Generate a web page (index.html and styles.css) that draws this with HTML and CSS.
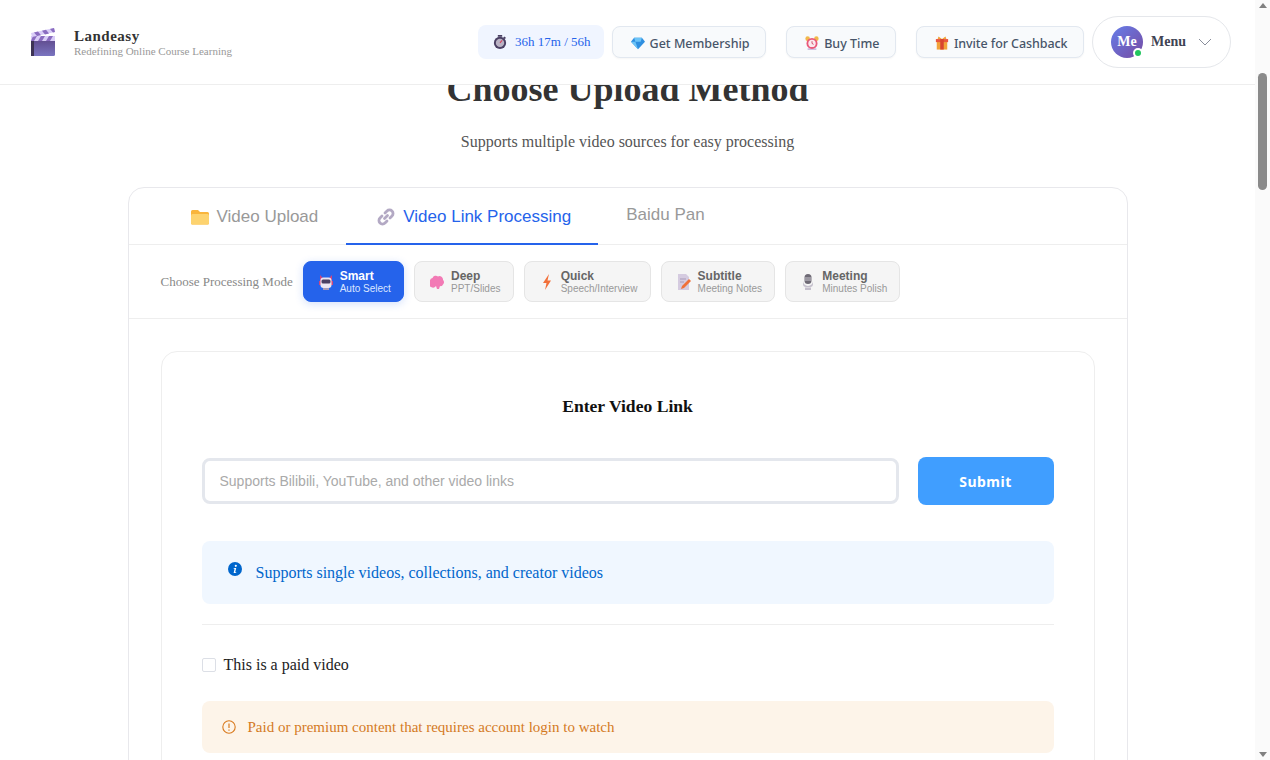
FILE: index.html
```html
<!DOCTYPE html>
<html lang="en">
<head>
    <meta charset="UTF-8">
    <meta name="viewport" content="width=device-width, initial-scale=1.0">
    <title>Landeasy - Choose Upload Method</title>
    <link rel="stylesheet" href="styles.css">
</head>
<body>
    <div class="window">
        <div class="page">
            <header class="topbar">
                <svg class="logo" viewBox="0 0 24 28">
                    <defs>
                        <linearGradient id="clapBody" x1="0" y1="0" x2="0" y2="1">
                            <stop offset="0" stop-color="#5f4a8c"/>
                            <stop offset="1" stop-color="#7a74c0"/>
                        </linearGradient>
                    </defs>
                    <rect x="0" y="11" width="24" height="17" rx="1.500" fill="url(#clapBody)"/>
                    <rect x="0" y="11" width="3" height="17" fill="#3d3355"/>
                    <rect x="0" y="8" width="24" height="5" fill="#d9cdf7"/>
                    <path d="M2 8h4l-3 5H0zM10 8h4l-3 5H7zM18 8h4l-3 5h-4z" fill="#8a6cc0"/>
                    <path d="M0 5L23 0l1 4L1 9z" fill="#d9cdf7"/>
                    <path d="M3 4.400l4-.9 3 3.700-4 .9zM11 2.700l4-.9 3 3.700-4 .9zM19 1l4-.9 1 3.900-2 .5z" fill="#8a6cc0"/>
                </svg>
                <div class="brand">
                    <div class="brand-name">Landeasy</div>
                    <div class="brand-tag">Redefining Online Course Learning</div>
                </div>
                <div class="top-actions">
                    <div class="timer">
                        <svg class="ico" viewBox="0 0 16 16">
                            <rect x="5.500" y="0" width="5" height="2" fill="#4a3f63"/>
                            <rect x="12" y="2" width="2.500" height="2" fill="#4a3f63" transform="rotate(40 13 3)"/>
                            <circle cx="8" cy="9" r="7" fill="#4a3f63"/>
                            <circle cx="8" cy="9" r="4.800" fill="#b9b2c4"/>
                            <path d="M8 9l2.500-3" stroke="#d8415c" stroke-width="1.300"/>
                        </svg>
                        <span>36h 17m / 56h</span>
                    </div>
                    <a class="top-btn">
                        <svg class="ico" viewBox="0 0 16 16">
                            <path d="M3.500 2h9L16 6.500 8 15 0 6.500z" fill="#2f8fe0"/>
                            <path d="M3.500 2h9L11 6.500H5zM0 6.500h5L8 15z" fill="#6cc4f7"/>
                        </svg>
                        Get Membership
                    </a>
                    <a class="top-btn wide-gap">
                        <svg class="ico" viewBox="0 0 16 16">
                            <circle cx="3" cy="3" r="2.600" fill="#f2b84b"/>
                            <circle cx="13" cy="3" r="2.600" fill="#f2b84b"/>
                            <rect x="3" y="14" width="10" height="2" fill="#cdbfe0"/>
                            <circle cx="8" cy="8.500" r="6.300" fill="#e9587a"/>
                            <circle cx="8" cy="8.500" r="4.200" fill="#fbe9ee"/>
                            <path d="M8 6v2.500l1.800 1" stroke="#c93c5e" stroke-width="1" fill="none"/>
                        </svg>
                        Buy Time
                    </a>
                    <a class="top-btn wide-gap invite">
                        <svg class="ico" viewBox="0 0 16 16">
                            <rect x="2" y="6" width="12" height="9.500" fill="#f2a33a"/>
                            <rect x="1" y="3.500" width="14" height="3.500" fill="#e9573f"/>
                            <rect x="6" y="3.500" width="4" height="12" fill="#d8452f"/>
                            <path d="M8 3.500L4 .5 3 3.500zM8 3.500l4-3 1 3z" fill="#f2a33a"/>
                        </svg>
                        Invite for Cashback
                    </a>
                    <div class="menu-btn">
                        <div class="avatar">Me<span class="online"></span></div>
                        <span class="menu-label">Menu</span>
                        <svg class="chevron" viewBox="0 0 14 8"><path d="M1 1l6 6 6-6" fill="none" stroke="#8a8f9c" stroke-width="1"/></svg>
                    </div>
                </div>
            </header>

            <main class="content">
                <h1>Choose Upload Method</h1>
                <p class="subtitle">Supports multiple video sources for easy processing</p>

                <section class="panel">
                    <div class="tabs">
                        <div class="tab">
                            <svg class="tab-ico" viewBox="0 0 18 16">
                                <path d="M0 2.500A1.500 1.500 0 0 1 1.500 1H7l2 2h7.500A1.500 1.500 0 0 1 18 4.500V14a1.500 1.500 0 0 1-1.500 1.500h-15A1.500 1.500 0 0 1 0 14z" fill="#f9b53c"/>
                                <rect x="0" y="5" width="18" height="10.500" rx="1.500" fill="#fdd36f"/>
                            </svg>
                            Video Upload
                        </div>
                        <div class="tab active">
                            <svg class="tab-ico" viewBox="0 0 18 18">
                                <path d="M7.500 10.500l3-3M8 5l2-2a3.500 3.500 0 0 1 5 5l-2 2M10 13l-2 2a3.500 3.500 0 0 1-5-5l2-2" fill="none" stroke="#b3a9c4" stroke-width="2.800" stroke-linecap="round"/>
                            </svg>
                            Video Link Processing
                        </div>
                        <div class="tab plain">Baidu Pan</div>
                    </div>

                    <div class="modes">
                        <span class="modes-label">Choose Processing Mode</span>
                        <div class="mode selected">
                            <svg class="mode-ico" viewBox="0 0 14 16">
                                <path d="M1 1l3 3h6l3-3v6H1z" fill="#d0457f"/>
                                <rect x="0" y="7" width="2" height="4" fill="#d0457f"/>
                                <rect x="12" y="7" width="2" height="4" fill="#d0457f"/>
                                <rect x="1.500" y="3.500" width="11" height="10.500" rx="3" fill="#ece5f2"/>
                                <rect x="2.500" y="5.500" width="9" height="4" rx="1.500" fill="#4a3f63"/>
                                <rect x="4" y="14" width="6" height="2" fill="#a79ab8"/>
                            </svg>
                            <div class="mode-text"><b>Smart</b><small>Auto Select</small></div>
                        </div>
                        <div class="mode">
                            <svg class="mode-ico" viewBox="0 0 14 14">
                                <path d="M0 7a3.500 3.500 0 0 1 2.500-4A3.500 3.500 0 0 1 8 1.500 3.500 3.500 0 0 1 13 5a3 3 0 0 1 0 4.500 2.500 2.500 0 0 1-3 1.500L9 14H7l-1-3A3.500 3.500 0 0 1 0 7z" fill="#f27ab5"/>
                            </svg>
                            <div class="mode-text"><b>Deep</b><small>PPT/Slides</small></div>
                        </div>
                        <div class="mode">
                            <svg class="mode-ico" viewBox="0 0 14 16">
                                <path d="M9 0L3 9h3.500L5 16l6-9.500H7.500z" fill="#f2703a"/>
                            </svg>
                            <div class="mode-text"><b>Quick</b><small>Speech/Interview</small></div>
                        </div>
                        <div class="mode">
                            <svg class="mode-ico" viewBox="0 0 14 16">
                                <path d="M1 0h8l3 3v13H1z" fill="#d5cbe0"/>
                                <path d="M3 5h6M3 8h4" stroke="#a99bb9" stroke-width="1"/>
                                <path d="M12 5l2 2-7 7-3 1 1-3z" fill="#f0703a"/>
                            </svg>
                            <div class="mode-text"><b>Subtitle</b><small>Meeting Notes</small></div>
                        </div>
                        <div class="mode">
                            <svg class="mode-ico" viewBox="0 0 14 16">
                                <rect x="3.500" y="0" width="7" height="10" rx="3.500" fill="#6e6a75"/>
                                <path d="M3.500 4h7M3.500 6h7" stroke="#c9c6cf" stroke-width="1"/>
                                <path d="M2 7a5 5 0 0 0 10 0v3a3 3 0 0 1-3 3H5a3 3 0 0 1-3-3z" fill="#c4bfcc"/>
                                <rect x="4" y="13.500" width="6" height="2.500" fill="#c4bfcc"/>
                            </svg>
                            <div class="mode-text"><b>Meeting</b><small>Minutes Polish</small></div>
                        </div>
                    </div>

                    <div class="panel-body">
                        <div class="link-card">
                            <h3>Enter Video Link</h3>
                            <div class="link-row">
                                <input class="link-input" type="text" placeholder="Supports Bilibili, YouTube, and other video links">
                                <button class="submit-btn">Submit</button>
                            </div>
                            <div class="info-box">
                                <svg class="info-ico" viewBox="0 0 14 14">
                                    <circle cx="7" cy="7" r="7" fill="#0066cc"/>
                                    <circle cx="7.800" cy="3.800" r="1.100" fill="#fff"/>
                                    <path d="M5.800 6h2.400l-1 4.200h1V11H5.600l1-4.200h-1z" fill="#fff"/>
                                </svg>
                                <span>Supports single videos, collections, and creator videos</span>
                            </div>
                            <div class="divider"></div>
                            <label class="paid-row">
                                <input type="checkbox" class="paid-check">
                                <span>This is a paid video</span>
                            </label>
                            <div class="warn-box">
                                <svg class="warn-ico" viewBox="0 0 14 14">
                                    <circle cx="7" cy="7" r="6.200" fill="none" stroke="#d97a1e" stroke-width="1.100"/>
                                    <path d="M7 3.500v4.500M7 9.500v1.200" stroke="#d97a1e" stroke-width="1.200"/>
                                </svg>
                                <span>Paid or premium content that requires account login to watch</span>
                            </div>
                        </div>
                    </div>
                </section>
            </main>
        </div>

        <div class="scrollbar">
            <span class="arrow-up"></span>
            <span class="thumb"></span>
            <span class="arrow-down"></span>
        </div>
    </div>
</body>
</html>
```

FILE: styles.css
```css
html, body {
    margin: 0;
    height: 100%;
    overflow: hidden;
    background: #fff;
}
body {
    font-family: "Liberation Serif", serif;
    color: #333;
}
.window {
    display: flex;
    height: 760px;
}
.page {
    flex: 1;
    min-width: 0;
    display: flex;
    flex-direction: column;
}

/* top bar */
.topbar {
    position: relative;
    z-index: 2;
    flex: none;
    height: 84px;
    display: flex;
    align-items: center;
    padding: 0 24px 0 31px;
    background: #fff;
    border-bottom: 1px solid #eee;
}
.logo {
    width: 24px;
    height: 28px;
    margin-right: 19px;
}
.brand-name {
    font-size: 15px;
    font-weight: bold;
    letter-spacing: 0.5px;
    line-height: 18px;
    color: #333;
}
.brand-tag {
    font-size: 11px;
    line-height: 13px;
    color: #999;
}
.top-actions {
    margin-left: auto;
    display: flex;
    align-items: center;
}
.ico {
    width: 14px;
    height: 14px;
    flex: none;
}
.timer {
    height: 34px;
    display: flex;
    align-items: center;
    gap: 8px;
    padding: 0 13px 0 15px;
    margin-right: 8px;
    background: #f0f5ff;
    border-radius: 8px;
    font-size: 13px;
    color: #2563eb;
}
.top-btn {
    box-sizing: border-box;
    height: 32px;
    display: flex;
    align-items: center;
    gap: 5px;
    padding: 2px 15.500px 0 18px;
    background: #f8fafc;
    border: 1px solid #e2e8f0;
    border-radius: 8px;
    box-shadow: 0 1px 2px rgba(0,0,0,0.04);
    font-family: "Noto Sans", sans-serif;
    font-size: 12.500px;
    font-weight: 500;
    color: #475569;
}
.wide-gap {
    margin-left: 20px;
}
.invite {
    margin-right: 8px;
    letter-spacing: -0.08px;
}
.menu-btn {
    box-sizing: border-box;
    width: 139px;
    height: 52px;
    display: flex;
    align-items: center;
    padding: 0 18px;
    background: #fff;
    border: 1px solid #e5e7eb;
    border-radius: 26px;
}
.avatar {
    position: relative;
    flex: none;
    width: 32px;
    height: 32px;
    margin-right: 8px;
    border-radius: 50%;
    background: linear-gradient(135deg, #667eea, #764ba2);
    color: #fff;
    font-size: 14px;
    font-weight: bold;
    line-height: 32px;
    text-align: center;
}
.online {
    position: absolute;
    right: 0;
    bottom: 0;
    width: 6px;
    height: 6px;
    border: 2px solid #fff;
    border-radius: 50%;
    background: #22c55e;
}
.menu-label {
    font-size: 14px;
    font-weight: bold;
    color: #3f4454;
    margin-top: -1px;
}
.chevron {
    width: 14px;
    height: 8px;
    margin-left: auto;
}

/* content */
.content {
    flex: 1;
    min-height: 0;
    overflow: hidden;
}
h1 {
    margin: -17px 0 0;
    font-size: 36px;
    line-height: 43px;
    text-align: center;
    color: #333;
}
.subtitle {
    margin: 21px 0 0;
    font-size: 16px;
    line-height: 20px;
    text-align: center;
    color: #555;
}
.panel {
    width: 1000px;
    box-sizing: border-box;
    margin: 35px auto 0;
    background: #fff;
    border: 1px solid #e8e8ec;
    border-radius: 16px;
}
.tabs {
    height: 56px;
    display: flex;
    padding-left: 31px;
    border-bottom: 1px solid #eee;
}
.tab {
    box-sizing: border-box;
    height: 57px;
    display: flex;
    align-items: center;
    gap: 8px;
    padding: 2px 28px 0 31px;
    font-family: "Liberation Sans", sans-serif;
    font-size: 17px;
    color: #999;
    border-bottom: 2px solid transparent;
}
.tab.active {
    padding-right: 27px;
    color: #2563eb;
    border-bottom-color: #2563eb;
}
.tab.plain {
    align-items: flex-start;
    padding: 17px 0 0 28px;
}
.tab-ico {
    width: 18px;
    height: 18px;
    flex: none;
}
.modes {
    height: 74px;
    box-sizing: border-box;
    display: flex;
    align-items: center;
    gap: 10px;
    padding: 0 0 0 32px;
    border-bottom: 1px solid #eee;
}
.modes-label {
    font-size: 13px;
    color: #888;
}
.mode {
    box-sizing: border-box;
    height: 41px;
    display: flex;
    align-items: center;
    gap: 7px;
    padding: 0 12.200px 0 15px;
    background: #f5f5f5;
    border: 1px solid #e5e5e5;
    border-radius: 8px;
    font-family: "Liberation Sans", sans-serif;
}
.mode-ico {
    width: 14px;
    height: 16px;
    flex: none;
}
.mode-text b {
    display: block;
    font-size: 12px;
    line-height: 14px;
    color: #666;
}
.mode-text small {
    display: block;
    font-size: 10px;
    line-height: 12px;
    color: #999;
}
.mode.selected {
    background: #2563eb;
    border-color: #2563eb;
    box-shadow: 0 2px 8px rgba(37,99,235,0.2);
}
.mode.selected b {
    color: #fff;
}
.mode.selected small {
    color: #dbe6ff;
}
.panel-body {
    padding: 32px;
}
.link-card {
    padding: 0 40px 40px;
    background: #fff;
    border: 1px solid #eee;
    border-radius: 16px;
}
h3 {
    margin: 0;
    padding-top: 44px;
    font-size: 17.600px;
    line-height: 20px;
    text-align: center;
    color: #111;
}
.link-row {
    display: flex;
    align-items: center;
    gap: 19px;
    margin-top: 41px;
}
.link-input {
    box-sizing: border-box;
    flex: 1;
    min-width: 0;
    height: 46px;
    padding: 0 15px;
    border: 3px solid #e4e7ed;
    border-radius: 8px;
    background: #fff;
    outline: none;
    font-family: "Liberation Sans", sans-serif;
    font-size: 14px;
}
.link-input::placeholder {
    color: #aaa;
}
.submit-btn {
    flex: none;
    width: 136px;
    height: 48px;
    border: none;
    border-radius: 8px;
    background: #409eff;
    color: #fff;
    font-family: "Noto Sans", sans-serif;
    font-size: 14px;
    font-weight: 700;
    letter-spacing: 0.5px;
}
.info-box {
    height: 63px;
    box-sizing: border-box;
    display: flex;
    align-items: center;
    gap: 14px;
    margin-top: 36px;
    padding: 0 26px;
    background: #f0f7ff;
    border-radius: 8px;
    font-size: 16px;
    color: #0066cc;
}
.info-ico {
    width: 14px;
    height: 14px;
    flex: none;
    margin-top: -8px;
}
.divider {
    height: 1px;
    margin-top: 20px;
    background: #eee;
}
.paid-row {
    display: flex;
    align-items: center;
    gap: 8px;
    margin-top: 31px;
    font-size: 16px;
    line-height: 18px;
    color: #222;
}
.paid-check {
    appearance: none;
    box-sizing: border-box;
    width: 14px;
    height: 14px;
    margin: 0;
    background: #fff;
    border: 1px solid #dcdfe6;
    border-radius: 2px;
}
.warn-box {
    height: 52px;
    box-sizing: border-box;
    display: flex;
    align-items: center;
    gap: 12px;
    margin-top: 27px;
    padding: 0 20px;
    background: #fdf4e9;
    border-radius: 8px;
    font-size: 15px;
    color: #d47a1f;
}
.warn-ico {
    width: 14px;
    height: 14px;
    flex: none;
}

/* page scrollbar */
.scrollbar {
    flex: none;
    width: 15px;
    height: 760px;
    display: flex;
    flex-direction: column;
    align-items: center;
    background: #fafafa;
}
.arrow-up, .arrow-down {
    flex: none;
    width: 0;
    height: 0;
    border-left: 4.500px solid transparent;
    border-right: 4.500px solid transparent;
}
.arrow-up {
    margin-top: 3px;
    border-bottom: 5px solid #808080;
}
.arrow-down {
    margin-top: auto;
    margin-bottom: 3px;
    border-top: 5px solid #808080;
}
.thumb {
    flex: none;
    width: 9px;
    height: 117px;
    margin-top: 65px;
    border-radius: 5px;
    background: #8a8a8a;
}
```
